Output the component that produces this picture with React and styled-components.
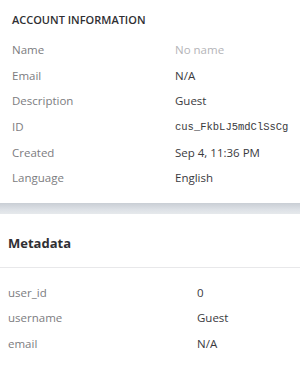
import React from "react";
import styled, { createGlobalStyle } from "styled-components";

const GlobalStyle = createGlobalStyle`
  body {
    margin: 0;
    background: #ffffff;
    font-family: "Open Sans", "Noto Sans", sans-serif;
    -webkit-font-smoothing: antialiased;
  }
`;

const account = [
  { label: "Name", value: "No name", muted: true },
  { label: "Email", value: "N/A" },
  { label: "Description", value: "Guest" },
  { label: "ID", value: "cus_FkbLJ5mdClSsCg", mono: true },
  { label: "Created", value: "Sep 4, 11:36 PM" },
  { label: "Language", value: "English" },
];

const metadata = [
  { label: "user_id", value: "0" },
  { label: "username", value: "Guest" },
  { label: "email", value: "N/A" },
];

function App() {
  return (
    <Page>
      <GlobalStyle />
      <AccountSection>
        <SectionTitle>Account information</SectionTitle>
        <List>
          {account.map((row) => (
            <Row key={row.label} $valueCol="163px">
              <Label>{row.label}</Label>
              <Value $muted={row.muted} $mono={row.mono}>
                {row.value}
              </Value>
            </Row>
          ))}
        </List>
      </AccountSection>
      <Band />
      <MetaSection>
        <MetaHeader>Metadata</MetaHeader>
        <MetaList>
          {metadata.map((row) => (
            <Row key={row.label} $valueCol="189px">
              <Label>{row.label}</Label>
              <Value>{row.value}</Value>
            </Row>
          ))}
        </MetaList>
      </MetaSection>
    </Page>
  );
}

export default App;

const Page = styled.div`
  width: 300px;
  height: 366px;
  overflow: hidden;
  background: #fff;
`;

const AccountSection = styled.section`
  padding: 12px 12px 12px 12px;
`;

const SectionTitle = styled.div`
  font-size: 11px;
  line-height: 16px;
  font-weight: 600;
  text-transform: uppercase;
  color: #2f2f33;
`;

const List = styled.div`
  margin-top: 9px;
`;

const Row = styled.div`
  display: grid;
  grid-template-columns: ${(props) => props.$valueCol} 1fr;
  align-items: center;
  height: 25.6px;
  font-size: 11.5px;
`;

const Label = styled.div`
  color: #7c7c80;
`;

const Value = styled.div`
  color: ${(props) => (props.$muted ? "#b4b4b8" : "#3a3a3e")};
  font-family: ${(props) =>
    props.$mono
      ? `"Liberation Mono", "DejaVu Sans Mono", monospace`
      : "inherit"};
  font-size: ${(props) => (props.$mono ? "10.5px" : "11.5px")};
  white-space: nowrap;
`;

const Band = styled.div`
  height: 11px;
  background: linear-gradient(#c9ced5, #dde1e6 60%, #e6e9ec);
`;

const MetaSection = styled.section``;

const MetaHeader = styled.div`
  padding: 20px 8px 15px;
  font-size: 13px;
  line-height: 18px;
  font-weight: 700;
  color: #2f2f33;
  border-bottom: 1px solid #e8e8ea;
`;

const MetaList = styled.div`
  padding: 12px 8px 0;
`;
